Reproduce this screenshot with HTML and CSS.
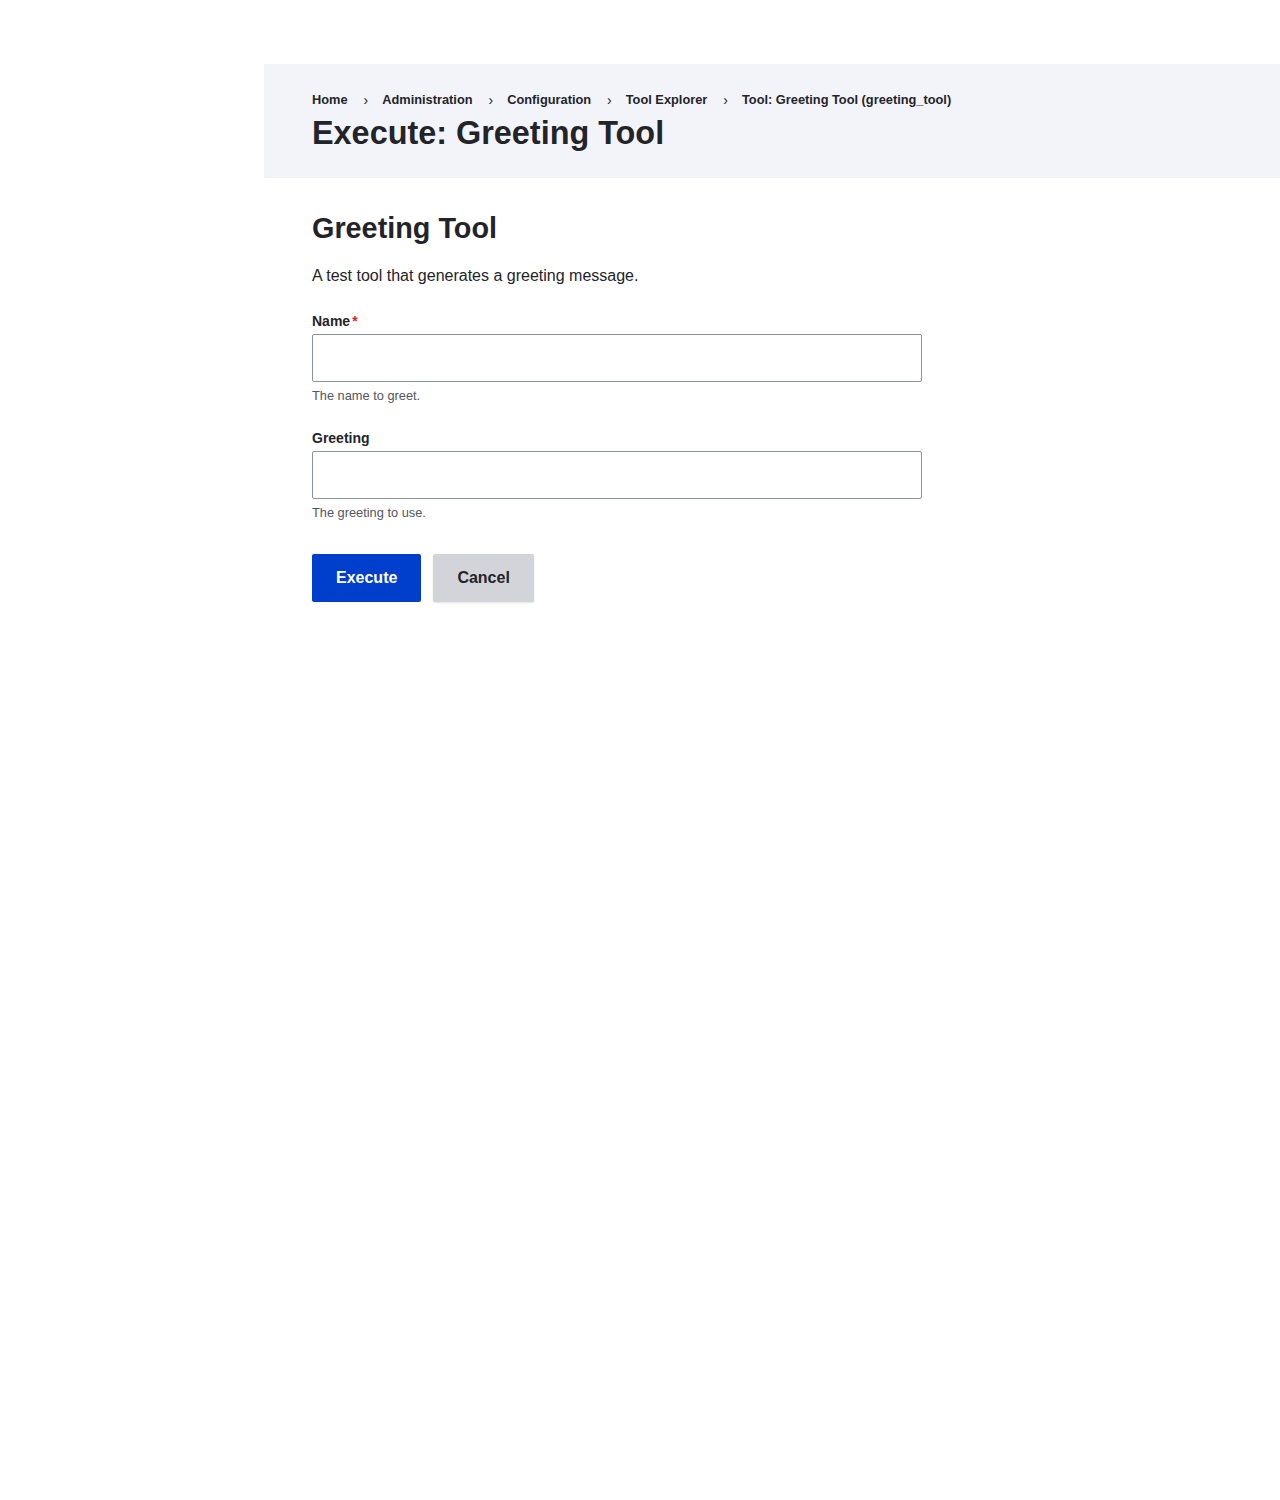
FILE: index.html
```html
<!DOCTYPE html>
<html lang="en">
<head>
<meta charset="utf-8">
<title>Execute: Greeting Tool</title>
<link rel="stylesheet" href="styles.css">
</head>
<body>
<div class="page">
  <header class="page-header">
    <nav class="breadcrumb">
      <ol>
        <li><a href="#">Home</a></li>
        <li><a href="#">Administration</a></li>
        <li><a href="#">Configuration</a></li>
        <li><a href="#">Tool Explorer</a></li>
        <li><a href="#">Tool: Greeting Tool (greeting_tool)</a></li>
      </ol>
    </nav>
    <h1 class="page-title">Execute: Greeting Tool</h1>
  </header>
  <main class="content">
    <h2 class="tool-title">Greeting Tool</h2>
    <p class="tool-desc">A test tool that generates a greeting message.</p>
    <form class="form">
      <div class="form-item">
        <label class="form-label" for="name">Name<span class="required">*</span></label>
        <input class="form-text" id="name" type="text">
        <div class="form-desc">The name to greet.</div>
      </div>
      <div class="form-item">
        <label class="form-label" for="greeting">Greeting</label>
        <input class="form-text" id="greeting" type="text">
        <div class="form-desc">The greeting to use.</div>
      </div>
      <div class="actions">
        <button type="button" class="button button-primary">Execute</button>
        <button type="button" class="button button-secondary">Cancel</button>
      </div>
    </form>
  </main>
</div>
</body>
</html>
```

FILE: styles.css
```css
html, body {
  margin: 0;
  padding: 0;
  background: #ffffff;
}
body {
  font-family: "Liberation Sans", Arial, sans-serif;
  color: #232429;
}
.page {
  margin-left: 264px;
  padding-top: 64px;
}
.page-header {
  background: #f3f4f9;
  padding: 26px 48px 25px;
}
.breadcrumb ol {
  list-style: none;
  margin: 0;
  padding: 0;
  display: flex;
  flex-wrap: wrap;
  font-size: 12.8px;
  line-height: 20px;
  font-weight: bold;
}
.breadcrumb li {
  display: flex;
  align-items: center;
}
.breadcrumb li + li::before {
  content: "\203A";
  padding: 0 14px 0 16px;
  font-weight: normal;
  font-size: 14px;
  color: #232429;
}
.breadcrumb a {
  color: #232429;
  text-decoration: none;
}
.page-title {
  margin: 3px 0 0;
  font-size: 32.4px;
  line-height: 40px;
  font-weight: bold;
}
.content {
  padding: 32px 48px;
}
.tool-title {
  margin: 0;
  font-size: 28.8px;
  line-height: 36px;
  font-weight: bold;
}
.tool-desc {
  margin: 18px 0 0;
  font-size: 16px;
  line-height: 24px;
}
.form {
  margin-top: 24px;
  width: 610px;
}
.form-item + .form-item {
  margin-top: 25px;
}
.form-label {
  display: block;
  font-size: 14px;
  line-height: 18px;
  font-weight: bold;
  margin-bottom: 4px;
}
.required {
  color: #dc2323;
  margin-left: 2px;
}
.form-text {
  display: block;
  box-sizing: border-box;
  width: 610px;
  height: 48px;
  border: 1px solid #8e929c;
  border-radius: 2px;
  background: #fff;
  padding: 0 16px;
  font-family: inherit;
  font-size: 16px;
  margin: 0;
}
.form-desc {
  margin-top: 5px;
  font-size: 12.8px;
  line-height: 17px;
  color: #545560;
}
.actions {
  display: flex;
  gap: 12px;
  margin-top: 33px;
}
.button {
  height: 48px;
  padding: 0 24px;
  border: none;
  border-radius: 2px;
  font-family: inherit;
  font-size: 16px;
  font-weight: bold;
  cursor: pointer;
}
.button-primary {
  background: #003ecc;
  color: #ffffff;
}
.button-secondary {
  background: #d3d4d9;
  color: #232429;
  box-shadow: 0 1px 2px rgba(0,0,0,0.12);
}
```
